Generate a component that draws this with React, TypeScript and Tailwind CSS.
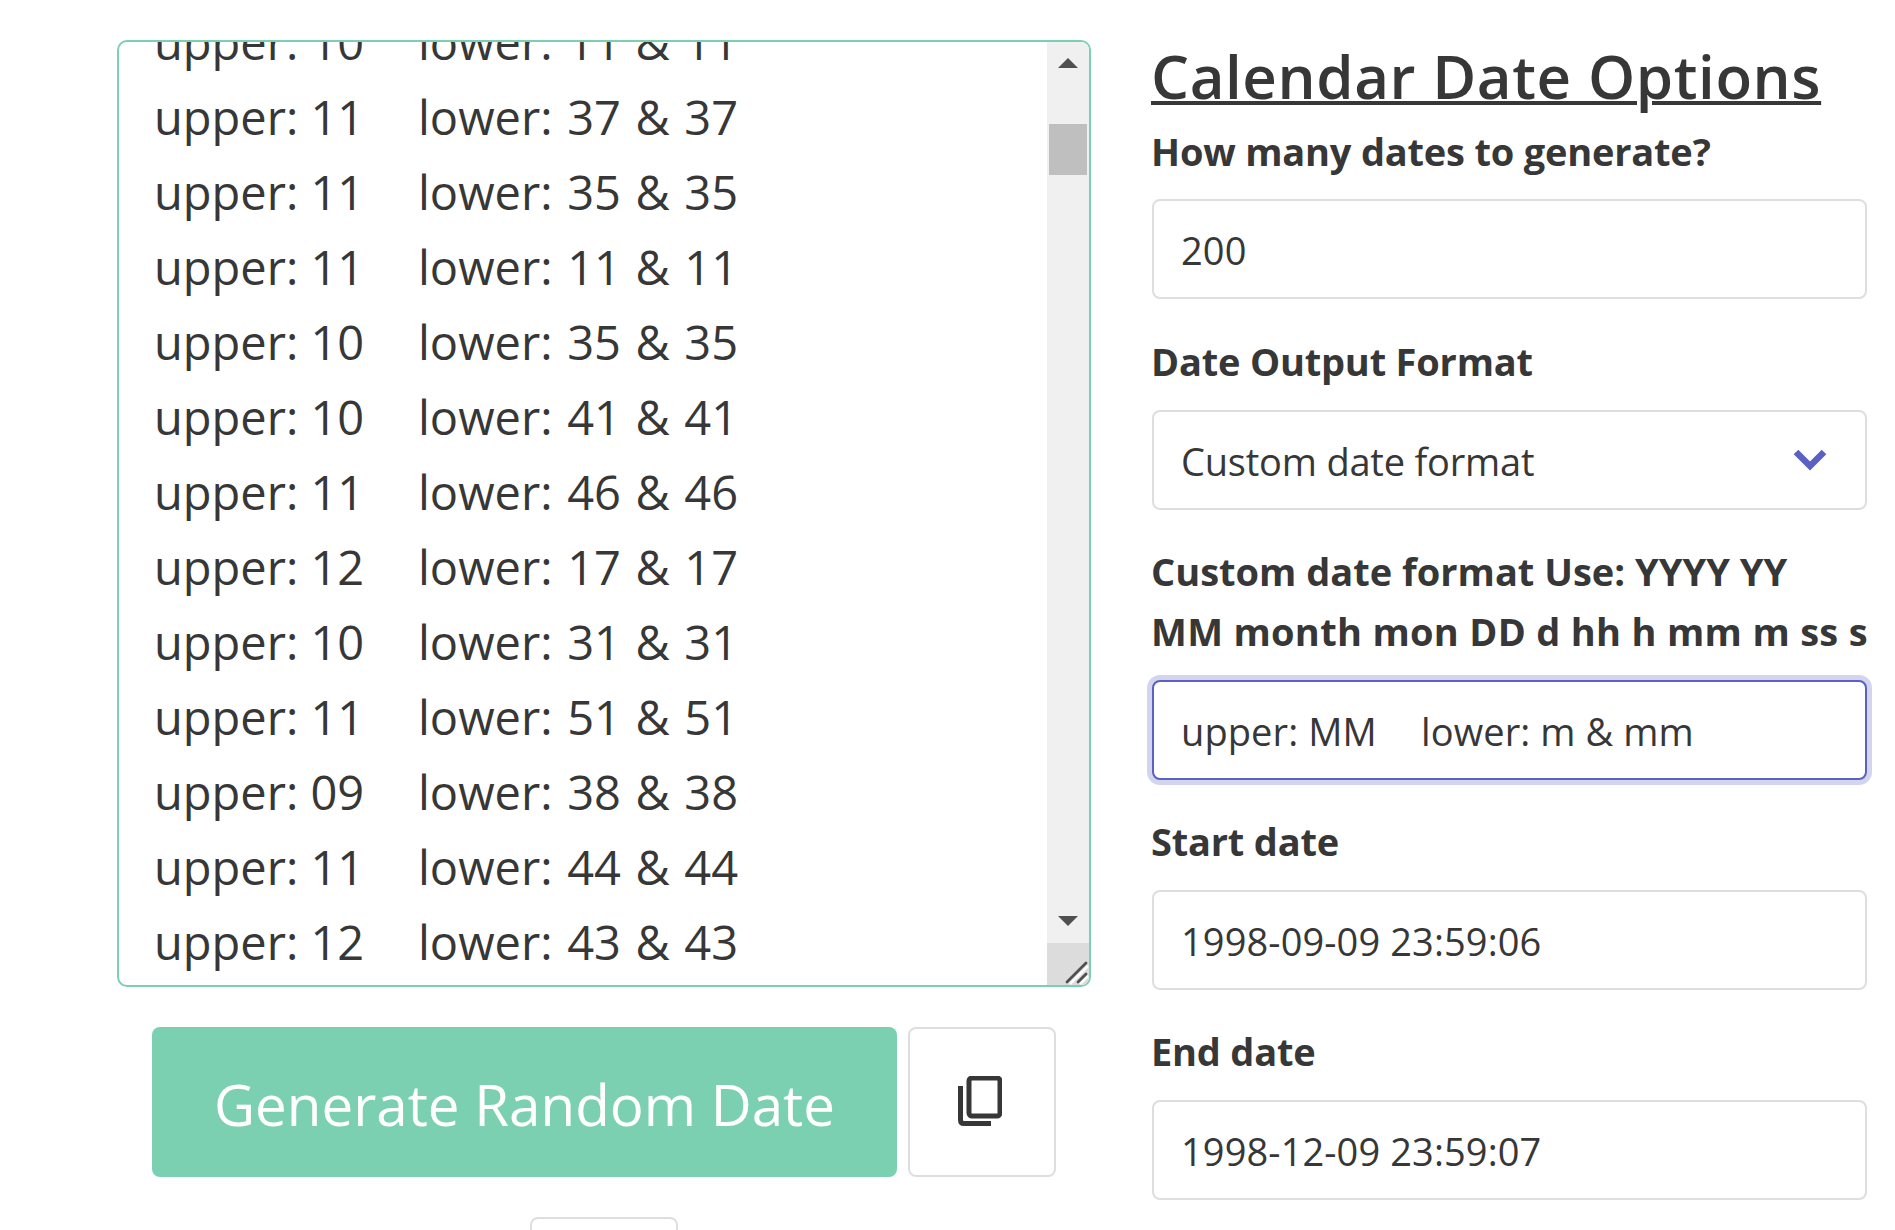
import React from "react";

const rows = [
  ["10", "11 & 11"],
  ["11", "37 & 37"],
  ["11", "35 & 35"],
  ["11", "11 & 11"],
  ["10", "35 & 35"],
  ["10", "41 & 41"],
  ["11", "46 & 46"],
  ["12", "17 & 17"],
  ["10", "31 & 31"],
  ["11", "51 & 51"],
  ["09", "38 & 38"],
  ["11", "44 & 44"],
  ["12", "43 & 43"],
];

const Field = ({ children, active }: { children: React.ReactNode; active?: boolean }) => (
  <div
    className={
      active
        ? "h-[100px] rounded-lg border-2 border-[#5a60c4] ring-[5px] ring-[#d3d5ee] bg-white px-[27px] pt-[2px] flex items-center text-[38px] tracking-[0.1px] text-[#373737]"
        : "h-[100px] rounded-lg border-2 border-[#dedede] bg-white px-[27px] pt-[2px] flex items-center text-[38px] tracking-[0.1px] text-[#373737]"
    }
  >
    {children}
  </div>
);

const Label = ({ children, className }: { children: React.ReactNode; className?: string }) => (
  <div className={`text-[38px] leading-[60px] font-bold tracking-[-0.2px] whitespace-nowrap text-[#373737] ${className ?? ""}`}>
    {children}
  </div>
);

const App = () => {
  return (
    <div className="h-[1230px] overflow-hidden bg-white flex pl-[117px] pt-[40px] font-['Open_Sans',sans-serif] text-[#373737]">
      <div className="w-[974px] shrink-0 flex flex-col">
        <div className="h-[947px] shrink-0 border-2 border-[#7bd0b2] rounded-[10px] overflow-hidden flex">
          <div className="flex-1 min-w-0 overflow-hidden pl-[35px]">
            <div className="-mt-[37px] text-[47px] leading-[75px]">
              {rows.map(([u, l], i) => (
                <div key={i} className="flex whitespace-nowrap">
                  <span className="w-[264px] shrink-0">upper: {u}</span>
                  <span className="[word-spacing:2.4px]">lower: {l}</span>
                </div>
              ))}
            </div>
          </div>
          <div className="w-[42px] shrink-0 flex flex-col bg-[#f0f0f0]">
            <div className="h-[82px] shrink-0 flex justify-center pt-[16px]">
              <svg width="20" height="10" viewBox="0 0 20 10">
                <path d="M10 0 L20 10 L0 10 Z" fill="#505050" />
              </svg>
            </div>
            <div className="h-[51px] shrink-0 ml-[2px] mr-[2px] bg-[#bfbfbf]" />
            <div className="flex-1" />
            <div className="h-[27px] shrink-0 flex justify-center">
              <svg width="20" height="10" viewBox="0 0 20 10">
                <path d="M0 0 L20 0 L10 10 Z" fill="#505050" />
              </svg>
            </div>
            <div className="h-[42px] shrink-0 bg-[#dcdcdc] flex items-end justify-end">
              <svg width="42" height="42" viewBox="0 0 42 42">
                <path d="M23 41 L41 23 M33 41 L41 33" stroke="#ffffff" strokeWidth="2.5" fill="none" />
                <path d="M20 39 L39 20 M31 39 L39 31" stroke="#505050" strokeWidth="2.8" strokeLinecap="round" fill="none" />
              </svg>
            </div>
          </div>
        </div>
        <div className="flex mt-[40px] ml-[35px] gap-[11px] shrink-0">
          <button className="w-[745px] h-[150px] rounded-lg bg-[#7bd0b2] text-white text-[56.5px] pt-[7px]">
            Generate Random Date
          </button>
          <button className="w-[148px] h-[150px] rounded-lg border-2 border-[#dedede] bg-white flex items-center justify-center">
            <svg width="44" height="50" viewBox="0 0 44 50" className="-mt-[2px] -ml-[4px]">
              <rect x="11" y="2" width="31" height="38" rx="3" fill="none" stroke="#373737" strokeWidth="5" />
              <path d="M2.5 10 V44 Q2.5 47.5 6 47.5 H33" fill="none" stroke="#373737" strokeWidth="5" />
            </svg>
          </button>
        </div>
        <div className="mt-[40px] ml-[413px] w-[148px] h-[60px] shrink-0 rounded-lg border-2 border-[#dedede]" />
      </div>

      <div className="w-[716px] shrink-0 ml-[60px] pl-[1px]">
        <h1 className="text-[60px] leading-[72px] -ml-[1px] font-semibold underline decoration-[4px] tracking-[0.6px] whitespace-nowrap">
          Calendar Date Options
        </h1>
        <Label className="mt-[9px] mb-[18px] -ml-[1px]">How many dates to generate?</Label>
        <Field>200</Field>
        <Label className="mt-[32px] mb-[19px] -ml-[1px]">Date Output Format</Label>
        <div className="relative">
          <Field>
            <span className="tracking-[-0.2px]">Custom date format</span>
          </Field>
          <svg width="34" height="22" viewBox="0 0 34 22" className="absolute left-[641px] top-[39px]">
            <path d="M3 3 L17 17 L31 3" fill="none" stroke="#5a60c4" strokeWidth="6.5" />
          </svg>
        </div>
        <Label className="mt-[31px] mb-[19px] -ml-[1px]">
          <span className="tracking-[0px]">Custom date format Use: YYYY YY</span>
          <br />
          <span className="tracking-[0.3px]">MM month mon DD d hh h mm m ss s</span>
        </Label>
        <Field active>
          <span className="w-[240px] shrink-0">upper: MM</span>
          <span>lower: m &amp; mm</span>
        </Field>
        <Label className="mt-[31px] mb-[19px] -ml-[1px]">Start date</Label>
        <Field>1998-09-09 23:59:06</Field>
        <Label className="mt-[31px] mb-[19px] -ml-[1px]">End date</Label>
        <Field>1998-12-09 23:59:07</Field>
      </div>
    </div>
  );
};

export default App;
